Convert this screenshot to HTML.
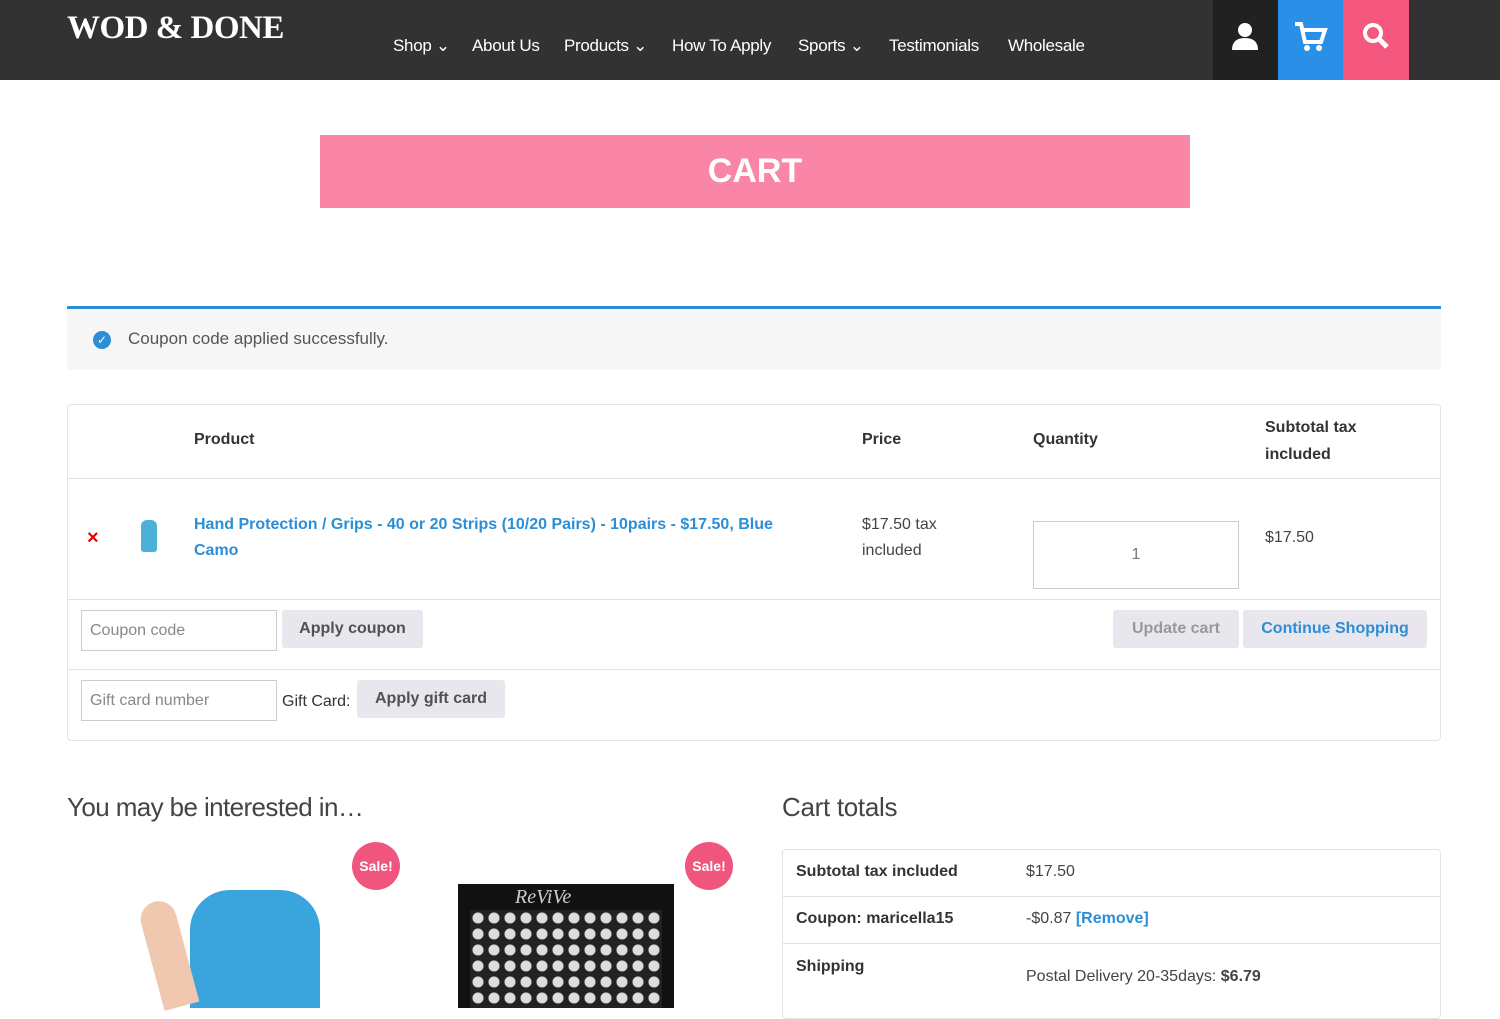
<!DOCTYPE html>
<html><head><style>
*{margin:0;padding:0;box-sizing:border-box}
body{width:1500px;height:1008px;overflow:hidden;background:#fff;font-family:"Liberation Sans",sans-serif;color:#333;position:relative}
.a{position:absolute}
.hdr{left:0;top:0;width:1500px;height:80px;background:#323232}
.logo{left:67px;top:10px;color:#fff;font-family:"Liberation Serif",serif;font-weight:bold;font-size:33px;letter-spacing:-0.5px}
.nav{top:36px;color:#fff;font-size:17px;letter-spacing:-0.3px}
.b{color:#333;font-weight:bold;font-size:16px}
.lnk{color:#2a8fd6;font-weight:bold;font-size:16px}
.btn{background:#e9e6ed;font-weight:bold;font-size:16px;color:#515151;display:flex;align-items:center;justify-content:center;border-radius:3px}
.inp{border:1px solid #ccc;font-size:16px;color:#888;padding-left:8px;display:flex;align-items:center}
.sale{width:48px;height:48px;border-radius:50%;background:#f0557d;color:#fff;font-weight:bold;font-size:14px;display:flex;align-items:center;justify-content:center}
</style></head><body>
<div class="a hdr"></div>
<div class="a logo">WOD &amp; DONE</div>
<div class="a nav" style="left:393px">Shop ⌄</div>
<div class="a nav" style="left:472px">About Us</div>
<div class="a nav" style="left:564px">Products ⌄</div>
<div class="a nav" style="left:672px">How To Apply</div>
<div class="a nav" style="left:798px">Sports ⌄</div>
<div class="a nav" style="left:889px">Testimonials</div>
<div class="a nav" style="left:1008px">Wholesale</div>
<div class="a" style="left:1213px;top:0;width:65px;height:80px;background:#212121"><svg width="65" height="80"><circle cx="32" cy="30" r="7" fill="#fff"/><path d="M19 50 q0-12 13-12 q13 0 13 12z" fill="#fff"/></svg></div>
<div class="a" style="left:1278px;top:0;width:65px;height:80px;background:#2a8fe6"><svg width="65" height="80"><path d="M17 24h6l4 18h16l4-12H25" stroke="#fff" stroke-width="4" fill="none"/><circle cx="29" cy="48" r="3" fill="#fff"/><circle cx="41" cy="48" r="3" fill="#fff"/></svg></div>
<div class="a" style="left:1343px;top:0;width:66px;height:80px;background:#f4587e"><svg width="66" height="80"><circle cx="30" cy="33" r="8" stroke="#fff" stroke-width="4" fill="none"/><path d="M36 39l8 8" stroke="#fff" stroke-width="5"/></svg></div>
<div class="a" style="left:320px;top:135px;width:870px;height:73px;background:#f986a7;color:#fff;font-weight:bold;font-size:34px;display:flex;align-items:center;justify-content:center">CART</div>
<div class="a" style="left:67px;top:306px;width:1374px;height:64px;background:#f6f6f7;border-top:3px solid #2a8fd6"></div>
<div class="a" style="left:93px;top:331px;width:18px;height:18px;border-radius:50%;background:#2a8fd6;color:#fff;font-size:12px;text-align:center;line-height:18px">✓</div>
<div class="a" style="left:128px;top:329px;font-size:17px;color:#555">Coupon code applied successfully.</div>
<div class="a" style="left:67px;top:404px;width:1374px;height:337px;border:1px solid #e3e3e3;border-radius:4px"></div>
<div class="a" style="left:68px;top:478px;width:1372px;height:1px;background:#e3e3e3"></div>
<div class="a" style="left:68px;top:599px;width:1372px;height:1px;background:#e3e3e3"></div>
<div class="a" style="left:68px;top:669px;width:1372px;height:1px;background:#e3e3e3"></div>
<div class="a b" style="left:194px;top:431px">Product</div>
<div class="a b" style="left:862px;top:431px">Price</div>
<div class="a b" style="left:1033px;top:431px">Quantity</div>
<div class="a b" style="left:1265px;top:414px;line-height:27px">Subtotal tax<br>included</div>
<div class="a" style="left:87px;top:527px;color:#e00;font-weight:bold;font-size:20px">×</div>
<div class="a" style="left:141px;top:520px;width:16px;height:32px;background:#4ab0d8;border-radius:6px 6px 3px 3px"></div>
<div class="a lnk" style="left:194px;top:512px;line-height:26px;width:620px">Hand Protection / Grips - 40 or 20 Strips (10/20 Pairs) - 10pairs - $17.50, Blue Camo</div>
<div class="a" style="left:862px;top:512px;line-height:26px;font-size:16px;color:#444">$17.50 tax<br>included</div>
<div class="a" style="left:1033px;top:521px;width:206px;height:68px;border:1px solid #ccc;font-size:16px;color:#777;display:flex;align-items:center;justify-content:center">1</div>
<div class="a" style="left:1265px;top:529px;font-size:16px;color:#444">$17.50</div>
<div class="a inp" style="left:81px;top:610px;width:196px;height:41px">Coupon code</div>
<div class="a btn" style="left:282px;top:610px;width:141px;height:38px">Apply coupon</div>
<div class="a btn" style="left:1113px;top:610px;width:126px;height:38px;color:#999">Update cart</div>
<div class="a btn" style="left:1243px;top:610px;width:184px;height:38px;color:#2a8fd6">Continue Shopping</div>
<div class="a inp" style="left:81px;top:680px;width:196px;height:41px">Gift card number</div>
<div class="a" style="left:282px;top:693px;font-size:16px">Gift Card:</div>
<div class="a btn" style="left:357px;top:680px;width:148px;height:38px">Apply gift card</div>
<div class="a" style="left:67px;top:792px;font-size:26px;color:#444;letter-spacing:-0.6px">You may be interested in…</div>
<div class="a" style="left:782px;top:792px;font-size:26px;color:#444;letter-spacing:-0.3px">Cart totals</div>
<div class="a sale" style="left:352px;top:842px">Sale!</div>
<div class="a sale" style="left:685px;top:842px">Sale!</div>
<div class="a" style="left:190px;top:890px;width:130px;height:118px;background:#3aa5dd;border-radius:40px 40px 0 0"></div>
<div class="a" style="left:150px;top:900px;width:36px;height:108px;background:#f0c8b0;border-radius:18px 18px 0 0;transform:rotate(-15deg)"></div>
<div class="a" style="left:458px;top:884px;width:216px;height:124px;background:#111"></div>
<div class="a" style="left:470px;top:910px;width:192px;height:98px;background:radial-gradient(circle,#ddd 5px,transparent 6px) 0 0/16px 16px,#222"></div>
<div class="a" style="left:515px;top:886px;color:#ccc;font-style:italic;font-size:20px;font-family:'Liberation Serif',serif">ReViVe</div>
<div class="a" style="left:782px;top:849px;width:659px;height:170px;border:1px solid #e3e3e3;border-radius:4px"></div>
<div class="a" style="left:783px;top:896px;width:657px;height:1px;background:#e3e3e3"></div>
<div class="a" style="left:783px;top:943px;width:657px;height:1px;background:#e3e3e3"></div>
<div class="a b" style="left:796px;top:863px">Subtotal tax included</div>
<div class="a" style="left:1026px;top:863px;font-size:16px;color:#444">$17.50</div>
<div class="a b" style="left:796px;top:910px">Coupon: maricella15</div>
<div class="a" style="left:1026px;top:910px;font-size:16px;color:#444">-$0.87 <span class="lnk">[Remove]</span></div>
<div class="a b" style="left:796px;top:958px">Shipping</div>
<div class="a" style="left:1026px;top:968px;font-size:16px;color:#444">Postal Delivery 20-35days: <b>$6.79</b></div>
</body></html>
